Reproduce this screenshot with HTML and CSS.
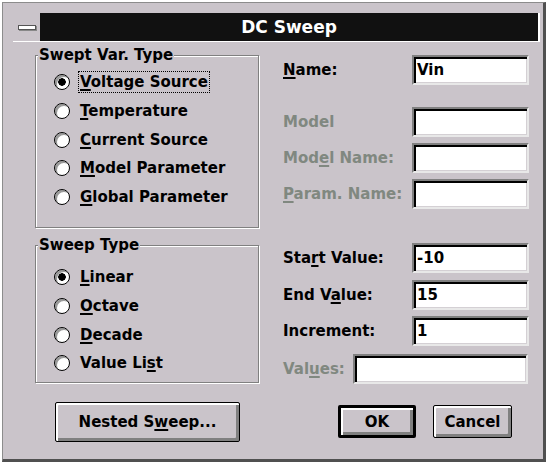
FILE: index.html
```html
<!DOCTYPE html>
<html lang="en">

<head>
	<meta charset="utf-8">
	<title>DC Sweep</title>
	<link rel="stylesheet" href="styles.css">
</head>

<body>
	<div class="dialog">
		<div class="titlebar">
			<div class="sysmenu"><span class="sysbar"></span></div>
			<div class="caption">DC Sweep</div>
		</div>

		<div class="indhold">
			<div class="venstre">
				<fieldset class="gruppe gruppe-var">
					<legend>Swept Var. Type</legend>
					<div class="valg"><span class="radio valgt"></span><span class="fokus"><u>V</u>oltage Source</span></div>
					<div class="valg"><span class="radio"></span><span><u>T</u>emperature</span></div>
					<div class="valg"><span class="radio"></span><span><u>C</u>urrent Source</span></div>
					<div class="valg"><span class="radio"></span><span><u>M</u>odel Parameter</span></div>
					<div class="valg"><span class="radio"></span><span><u>G</u>lobal Parameter</span></div>
				</fieldset>

				<fieldset class="gruppe gruppe-type">
					<legend>Sweep Type</legend>
					<div class="valg"><span class="radio valgt"></span><span><u>L</u>inear</span></div>
					<div class="valg"><span class="radio"></span><span><u>O</u>ctave</span></div>
					<div class="valg"><span class="radio"></span><span><u>D</u>ecade</span></div>
					<div class="valg"><span class="radio"></span><span>Value Li<u>s</u>t</span></div>
				</fieldset>

				<button class="knap knap-nested">Nested S<u>w</u>eep...</button>
			</div>

			<div class="hoejre">
				<div class="felt felt-navn"><span class="tekst"><u>N</u>ame:</span><span class="boks">Vin</span></div>
				<div class="felt felt-model"><span class="tekst slukket">Model</span><span class="boks"></span></div>
				<div class="felt felt-taet"><span class="tekst slukket">Mod<u>e</u>l Name:</span><span class="boks"></span></div>
				<div class="felt felt-taet"><span class="tekst slukket"><u>P</u>aram. Name:</span><span class="boks"></span></div>
				<div class="felt felt-start"><span class="tekst">Sta<u>r</u>t Value:</span><span class="boks">-10</span></div>
				<div class="felt felt-slut"><span class="tekst">End V<u>a</u>lue:</span><span class="boks">15</span></div>
				<div class="felt felt-taet"><span class="tekst">Increment:</span><span class="boks">1</span></div>
				<div class="felt felt-vaerdier"><span class="tekst kort slukket">Val<u>u</u>es:</span><span class="boks bred"></span></div>

				<div class="knapper">
					<button class="knap knap-ok">OK</button>
					<button class="knap knap-cancel">Cancel</button>
				</div>
			</div>
		</div>
	</div>
</body></html>
```

FILE: styles.css
```css
body {
	margin: 0;
	background: #fff;
	font-family: "DejaVu Sans", "Liberation Sans", sans-serif;
	font-weight: bold;
	font-size: 15px;
	color: #000;
}

u {
	text-decoration-thickness: 2px;
	text-underline-offset: 2px;
}

.dialog {
	margin: 2px 0 0 2px;
	width: 544px;
	height: 460px;
	box-sizing: border-box;
	background: #cac4ca;
	border-top: 1px solid #8c8c8c;
	border-left: 1px solid #8c8c8c;
	border-right: 3px solid #505050;
	border-bottom: 3px solid #505050;
	padding: 10px 3px 0 10px;
}

.titlebar {
	display: flex;
	height: 29px;
	box-sizing: border-box;
	background: #111;
	border-right: 2px solid #fff;
	border-bottom: 1px solid #fff;
}

.sysmenu {
	width: 27px;
	background: #cac4ca;
	display: flex;
	align-items: center;
	justify-content: center;
}

.sysbar {
	width: 16px;
	height: 3px;
	background: #fff;
	border: 1px solid #555;
	box-shadow: 1px 1px 0 #888;
}

.caption {
	flex: 1;
	color: #fff;
	text-align: center;
	font-size: 17px;
	line-height: 28px;
}

.indhold {
	display: flex;
	padding-left: 22px;
}

.venstre {
	width: 226px;
	margin-top: 4px;
}

.hoejre {
	width: 246px;
	margin-left: 22px;
}

/* gruppe bokse */

.gruppe {
	margin: 0;
	padding: 0;
	width: 224px;
	box-sizing: border-box;
	border: 1px solid #808080;
	box-shadow: inset 1px 1px #fff, 1px 1px #fff;
}

.gruppe legend {
	margin-left: 2px;
	padding: 0 1px;
	line-height: 18px;
	background: #cac4ca;
}

.gruppe-var {
	height: 182px;
	padding-top: 4px;
}

.gruppe-type {
	height: 147px;
	margin-top: 8px;
	padding-top: 9px;
}

.valg {
	display: flex;
	align-items: center;
	height: 28.7px;
	margin-left: 18px;
}

.radio {
	width: 14px;
	height: 14px;
	border: 1px solid #000;
	border-radius: 50%;
	background: #fff;
	box-shadow: inset 2px 2px 0 #9a9a9a;
	margin-right: 10px;
}

.radio.valgt {
	background: radial-gradient(circle, #000 0 3.5px, #fff 4px);
}

.fokus {
	outline: 1px dotted #000;
	outline-offset: 1px;
}

/* felter til hoejre */

.felt {
	display: flex;
	align-items: center;
	height: 30px;
}

.felt-navn {
	margin-top: 13px;
}

.felt-model {
	margin-top: 22px;
}

.felt-taet {
	margin-top: 6px;
}

.felt-start {
	margin-top: 34px;
}

.felt-slut {
	margin-top: 7px;
}

.felt-vaerdier {
	margin-top: 8px;
}

.tekst {
	width: 129px;
}

.tekst.kort {
	width: 70px;
}

.slukket {
	color: #808880;
}

.boks {
	width: 117px;
	height: 30px;
	box-sizing: border-box;
	background: #fff;
	border: 2px solid;
	border-color: #808080 #e8e8e8 #e8e8e8 #808080;
	box-shadow: inset 2px 2px #000, inset -1px -1px #d4d0d4;
	padding-left: 3px;
	line-height: 27px;
}

.boks.bred {
	width: 175px;
}

/* knapper */

.knap {
	font: inherit;
	color: #000;
	background: #cac4ca;
	border: 1px solid #000;
	border-radius: 2px;
	box-shadow: inset 2px 2px #fff, inset -3px -3px #808080;
	padding: 0;
	box-sizing: border-box;
}

.knap-nested {
	margin: 19px 0 0 20px;
	width: 185px;
	height: 40px;
}

.knapper {
	display: flex;
	margin-top: 21px;
}

.knap-ok {
	margin-left: 55px;
	width: 78px;
	height: 33px;
	border-width: 3px;
}

.knap-cancel {
	margin-left: 17px;
	width: 79px;
	height: 33px;
}
```
